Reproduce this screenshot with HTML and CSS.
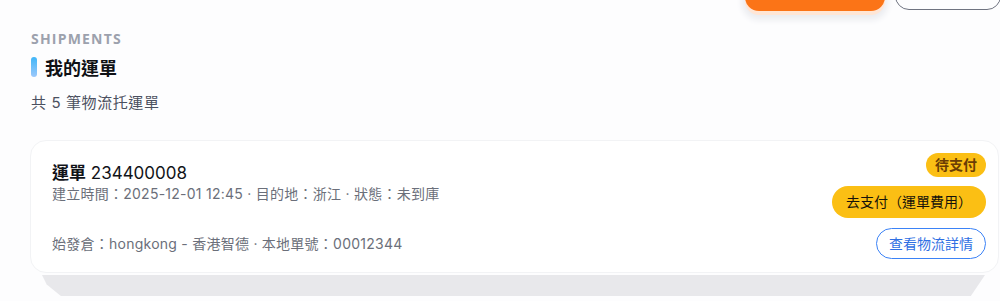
FILE: index.html
```html
<!DOCTYPE html>
<html lang="zh-Hant">
<head>
<meta charset="utf-8">
<title>我的運單</title>
<link rel="stylesheet" href="styles.css">
</head>
<body>
<div class="topbar">
  <button class="btn-orange" type="button" aria-label="新增運單"></button>
  <button class="btn-outline" type="button" aria-label="匯出"></button>
</div>
<main class="page">
  <div class="eyebrow">SHIPMENTS</div>
  <h1 class="heading"><span class="accent"></span>我的運單</h1>
  <p class="subtitle">共 5 筆物流托運單</p>

  <section class="card">
    <div class="card-main">
      <div class="card-top">
        <div class="card-title"><b>運單</b> 234400008</div>
        <div class="card-meta">建立時間：2025-12-01 12:45 · 目的地：浙江 · 狀態：未到庫</div>
      </div>
      <div class="card-meta card-bottom">始發倉：hongkong - 香港智德 · 本地單號：00012344</div>
    </div>
    <div class="card-side">
      <span class="badge">待支付</span>
      <button class="btn-pay" type="button">去支付（運單費用）</button>
      <button class="btn-track" type="button">查看物流詳情</button>
    </div>
  </section>
  <div class="next-card"></div>
</main>
</body>
</html>
```

FILE: styles.css
```css
* { box-sizing: border-box; }

html, body {
  margin: 0;
  padding: 0;
  background: #fdfdfe;
  font-family: Inter, "Noto Sans CJK TC", "Noto Sans", sans-serif;
  color: #111827;
  overflow: hidden;
}

.topbar {
  height: 12px;
  display: flex;
  justify-content: flex-end;
  align-items: flex-end;
  gap: 10px;
}

.btn-orange {
  width: 140px;
  height: 40px;
  margin-bottom: 1px;
  border: none;
  border-radius: 14px;
  background: #fb7417;
  box-shadow: 0 4px 0 0 #ffe6d6, 0 6px 6px 3px #ebecf0;
}

.btn-outline {
  width: 106px;
  height: 40px;
  margin-bottom: 2px;
  margin-right: -1px;
  border: 1px solid #6f7380;
  border-radius: 14px;
  background: #fdfdfe;
}

.page {
  padding: 0 1px 0 30px;
}

.eyebrow {
  margin: 18px 0 0 1px;
  font-size: 14px;
  line-height: 18px;
  font-weight: 700;
  letter-spacing: 1.2px;
  color: #9ca1ad;
  font-family: "Open Sans", Inter, sans-serif;
}

.heading {
  margin: 9px 0 0 1px;
  display: flex;
  align-items: center;
  gap: 8px;
  height: 20px;
  font-size: 18px;
  font-weight: 700;
  color: #0f1115;
}

.accent {
  width: 6px;
  height: 20px;
  border-radius: 3px;
  background: linear-gradient(180deg, #3fb6f8 0%, #9cc8fb 100%);
}

.subtitle {
  margin: 16px 0 0 1px;
  font-size: 15px;
  line-height: 20px;
  color: #4b5060;
  letter-spacing: 0.6px;
}

.card {
  margin-top: 27px;
  display: flex;
  justify-content: space-between;
  padding: 12px 12px 13px 21px;
  border: 1px solid #f2f3f5;
  border-radius: 16px;
  background: #ffffff;
}

.card-main {
  display: flex;
  flex-direction: column;
  padding: 9px 0 5px 0;
}

.card-title {
  font-size: 17px;
  line-height: 22px;
  color: #111318;
}

.card-title b {
  font-weight: 700;
}

.card-meta {
  font-size: 14px;
  line-height: 20px;
  color: #6b6f7a;
  letter-spacing: 0.25px;
}

.card-bottom {
  margin-top: auto;
}

.card-side {
  display: flex;
  flex-direction: column;
  align-items: flex-end;
}

.badge {
  height: 24px;
  padding: 0 9px;
  border-radius: 12px;
  background: #fbbf14;
  color: #6b3d05;
  font-size: 14px;
  font-weight: 700;
  line-height: 24px;
}

.btn-pay {
  margin-top: 9px;
  height: 32px;
  padding: 0 14px;
  border: none;
  border-radius: 16px;
  background: #fbbf14;
  color: #15120a;
  font-family: inherit;
  font-size: 14px;
  line-height: 32px;
}

.btn-track {
  margin-top: 10px;
  height: 31px;
  padding: 0 12px;
  border: 1px solid #3b82f6;
  border-radius: 16px;
  background: #ffffff;
  color: #2f6fe3;
  font-family: inherit;
  font-size: 14px;
  line-height: 29px;
}

.next-card {
  margin: 2px 14px 0 12px;
  height: 21px;
  background: #e8e8eb;
  clip-path: polygon(0 0, 100% 0, 98.5% 100%, 2% 100%, 0.5% 45%);
}
```
